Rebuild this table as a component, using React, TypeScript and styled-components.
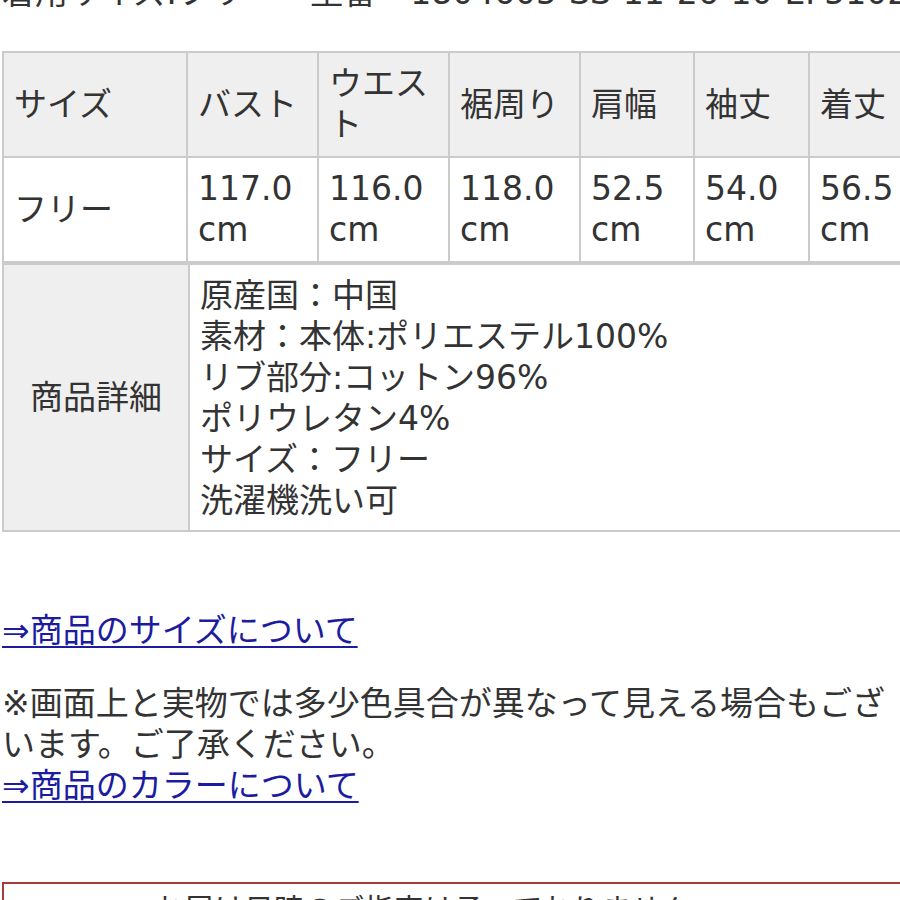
import React from "react";
import styled, { createGlobalStyle } from "styled-components";

const Global = createGlobalStyle`
  html, body { margin: 0; padding: 0; overflow: hidden; background: #fff; }
  body {
    font-family: "DejaVu Sans", "Noto Sans CJK JP", sans-serif;
    color: #333;
  }
`;

const Page = styled.div`
  width: 900px;
  padding-left: 2px;
  box-sizing: border-box;
  font-size: 33px;
  line-height: 41px;
`;

const TopLine = styled.div`
  margin-top: -28px;
  white-space: nowrap;
  display: flex;
  gap: 34px;
`;

const Table = styled.table<{ $top?: number }>`
  border-collapse: collapse;
  table-layout: fixed;
  width: 921px;
  font-size: 33px;
  line-height: 41px;
  color: #333;
  margin-top: ${(p) => p.$top ?? 0}px;
`;

const Th = styled.th`
  background: #efefef;
  font-weight: 400;
  text-align: left;
  padding: 10px 10px 11px 10px;
  border: 2px solid #cbcbcb;
  vertical-align: middle;
  height: 82px;
`;

const Td = styled.td`
  text-align: left;
  padding: 10px 10px 11px 10px;
  border: 2px solid #cbcbcb;
  vertical-align: middle;
  height: 82px;
`;

const LabelCell = styled.td`
  background: #efefef;
  text-align: center;
  border: 2px solid #cbcbcb;
  vertical-align: middle;
  padding: 0;
`;

const DetailCell = styled.td`
  border: 2px solid #cbcbcb;
  padding: 10px 10px 9px 10px;
  vertical-align: top;
`;

const LinkLine = styled.a<{ $top?: number }>`
  display: inline-block;
  margin-top: ${(p) => p.$top ?? 0}px;
  color: #1c1ca0;
  text-decoration: underline;
  text-decoration-thickness: 2px;
  text-underline-offset: 4px;
`;

const Notice = styled.p`
  margin: 32px 0 0 0;
  width: 898px;
`;

const RedBox = styled.div`
  margin-top: 76px;
  border: 2px solid #a83a3a;
  border-right: none;
  height: 120px;
  width: 920px;
  padding: 5px 0 0 150px;
  box-sizing: border-box;
  text-align: left;
  font-size: 30px;
`;

const cols = [184, 131, 131, 131, 114, 115, 115];
const heads = ["サイズ", "バスト", "ウエスト", "裾周り", "肩幅", "袖丈", "着丈"];
const vals = ["フリー", "117.0 cm", "116.0 cm", "118.0 cm", "52.5 cm", "54.0 cm", "56.5 cm"];

const details = [
  "原産国：中国",
  "素材：本体:ポリエステル100%",
  "リブ部分:コットン96%",
  "ポリウレタン4%",
  "サイズ：フリー",
  "洗濯機洗い可",
];

export default function App() {
  return (
    <>
      <Global />
      <Page>
        <TopLine>
          <span>着用サイズ:フリー</span>
          <span>型番</span>
          <span>1804605-SS-11-26-10-EF5102</span>
        </TopLine>
        <Table $top={38}>
          <colgroup>
            {cols.map((w, i) => (
              <col key={i} style={{ width: w }} />
            ))}
          </colgroup>
          <thead>
            <tr>
              {heads.map((h) => (
                <Th key={h}>{h}</Th>
              ))}
            </tr>
          </thead>
          <tbody>
            <tr>
              {vals.map((v, i) => (
                <Td key={i}>{v}</Td>
              ))}
            </tr>
          </tbody>
        </Table>
        <Table $top={0}>
          <colgroup>
            <col style={{ width: 186 }} />
            <col />
          </colgroup>
          <tbody>
            <tr>
              <LabelCell>商品詳細</LabelCell>
              <DetailCell>
                {details.map((d) => (
                  <div key={d}>{d}</div>
                ))}
              </DetailCell>
            </tr>
          </tbody>
        </Table>
        <div>
          <LinkLine href="#" $top={78}>⇒商品のサイズについて</LinkLine>
        </div>
        <Notice>※画面上と実物では多少色具合が異なって見える場合もございます。ご了承ください。</Notice>
        <div>
          <LinkLine href="#">⇒商品のカラーについて</LinkLine>
        </div>
        <RedBox>お届け日時のご指定は承っておりません。</RedBox>
      </Page>
    </>
  );
}
